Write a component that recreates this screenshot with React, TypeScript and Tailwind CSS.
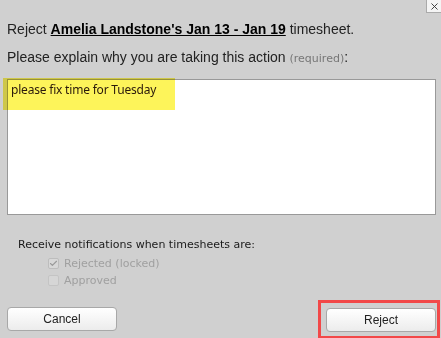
import { Check, X } from "lucide-react";

export default function App() {
  return (
    <div className="relative h-[338px] w-[441px] overflow-hidden bg-[#d0d0d0] font-['Liberation_Sans',Arial,sans-serif] text-[#222]">
      {/* close */}
      <button className="absolute right-0 top-0 flex h-[13px] w-[15px] items-center justify-center border border-t-0 border-r-0 border-[#aaa] bg-[#f4f4f4]">
        <X className="h-[11px] w-[11px] text-[#333]" strokeWidth={2} />
      </button>

      <div className="flex flex-col pl-[7px] pr-[5px] pt-[21px]">
        <p className="text-[14px] leading-[17px]">
          Reject{" "}
          <a className="font-bold text-black underline">
            Amelia Landstone's Jan 13 - Jan 19
          </a>{" "}
          timesheet.
        </p>
        <p className="mt-[11px] text-[14px] leading-[17px]">
          Please explain why you are taking this action{" "}
          <span className="font-['DejaVu_Sans',sans-serif] text-[11px] text-[#777]">(required)</span>:
        </p>

        <div className="relative mt-[12px] h-[136px] w-[429px] border border-[#999] bg-white">
          <p className="pl-[3px] pt-[2px] font-['Noto_Sans',sans-serif] text-[12px] leading-[16px] tracking-[-0.2px] text-[#2a1a1a]">
            please fix time for Tuesday
          </p>
          {/* yellow highlight */}
          <div className="absolute left-[-5px] top-[-2px] h-[32px] w-[172px] bg-[#fdf45a] mix-blend-multiply" />
        </div>

        <div className="ml-[11px] mt-[21px] flex flex-col font-['DejaVu_Sans',sans-serif] text-[11px] leading-[17px]">
          <span className="text-[#1a1a1a]">Receive notifications when timesheets are:</span>
          <label className="ml-[30px] mt-[2px] flex items-center gap-[5px] text-[#a0a0a0]">
            <span className="flex h-[11px] w-[11px] items-center justify-center rounded-[2px] border border-[#bdbdbd] bg-[#d8d8d8]">
              <Check className="h-[9px] w-[9px] text-[#999]" strokeWidth={3} />
            </span>
            Rejected (locked)
          </label>
          <label className="ml-[30px] flex items-center gap-[5px] text-[#a0a0a0]">
            <span className="h-[11px] w-[11px] rounded-[2px] border border-[#c4c4c4] bg-[#d6d6d6]" />
            Approved
          </label>
        </div>

        <div className="mt-[18px] flex items-start justify-between">
          <button className="h-[24px] w-[110px] rounded-[4px] border border-[#a8a8a8] bg-gradient-to-b from-white to-[#ececec] text-[12px] text-[#222]">
            Cancel
          </button>
          <div className="relative">
            <button className="h-[24px] w-[110px] rounded-[4px] border border-[#a8a8a8] bg-gradient-to-b from-white to-[#ececec] text-[12px] text-[#222]">
              Reject
            </button>
            {/* annotation box */}
            <div className="pointer-events-none absolute left-[-8px] top-[-7px] h-[39px] w-[122px] border-[3px] border-[#f24848]" />
          </div>
        </div>
      </div>
    </div>
  );
}
